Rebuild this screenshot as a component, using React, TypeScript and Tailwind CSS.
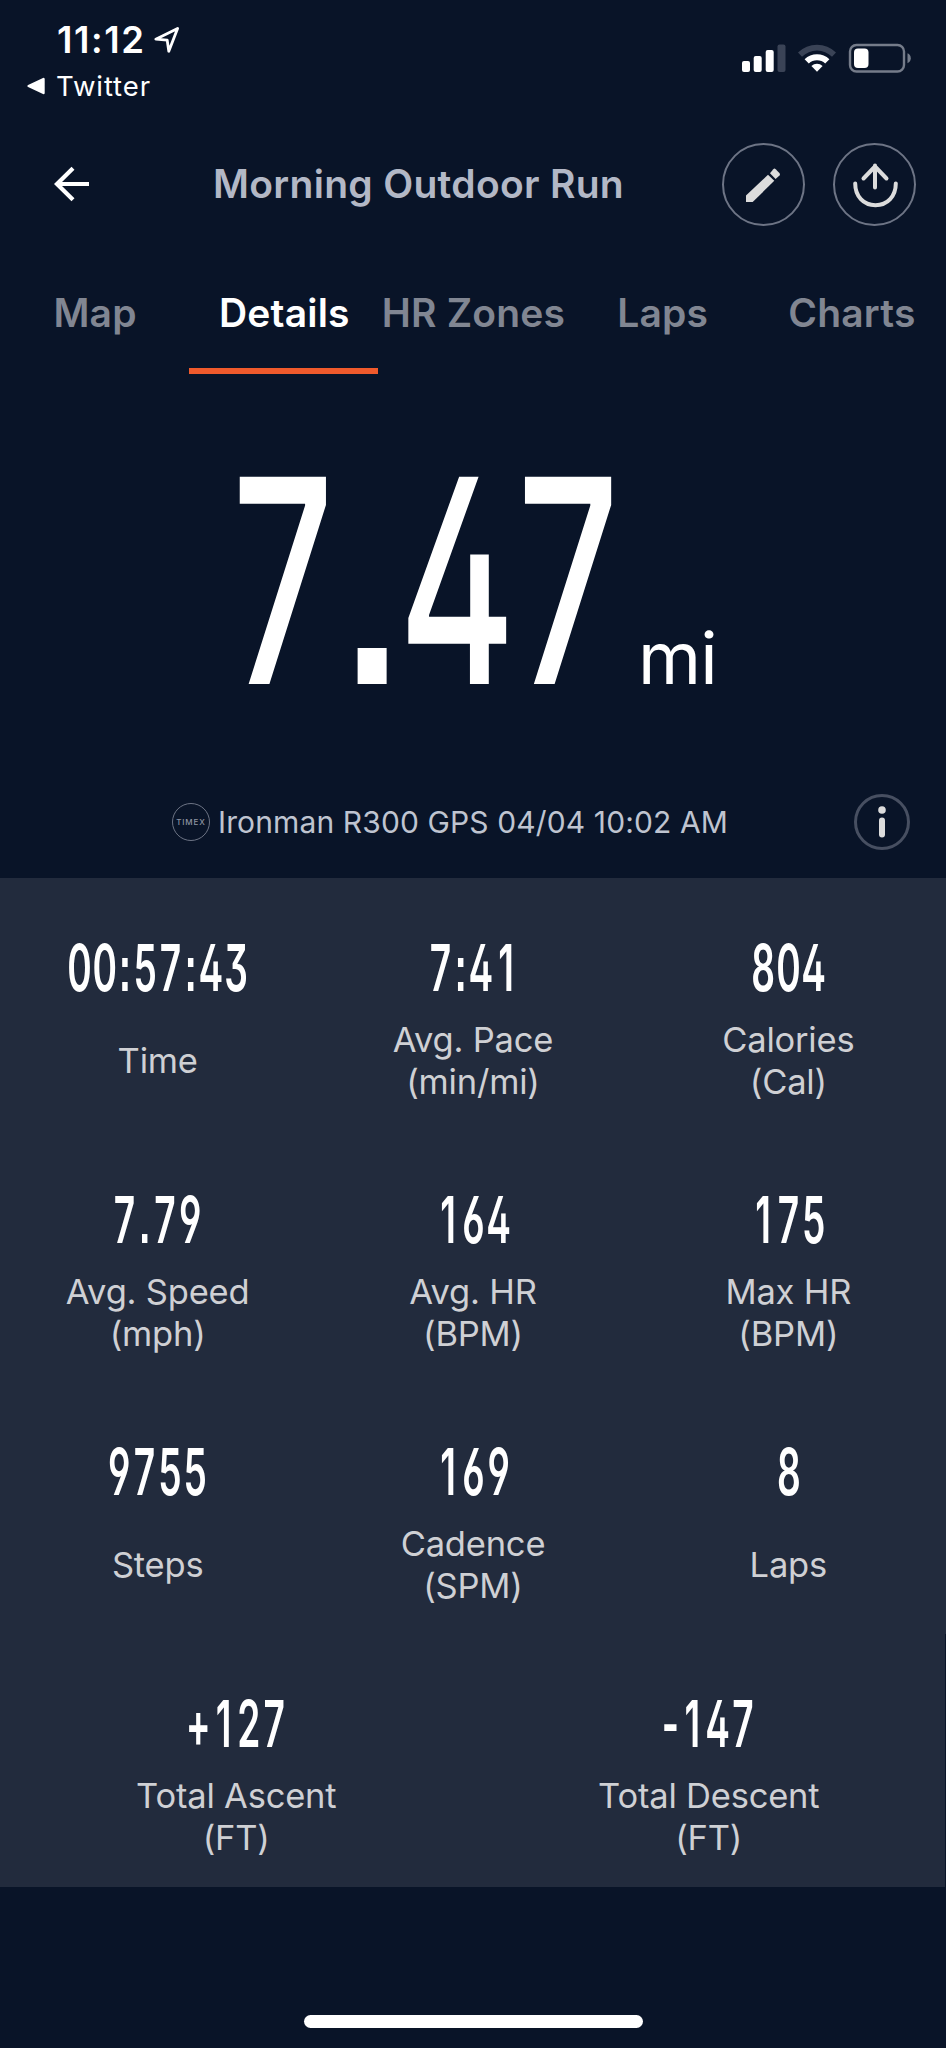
import clsx from "clsx";

type Stat = {
  value: string;
  label: string;
  unit?: string;
};

const tabs = ["Map", "Details", "HR Zones", "Laps", "Charts"];

const rows: Stat[][] = [
  [
    { value: "00:57:43", label: "Time" },
    { value: "7:41", label: "Avg. Pace", unit: "(min/mi)" },
    { value: "804", label: "Calories", unit: "(Cal)" },
  ],
  [
    { value: "7.79", label: "Avg. Speed", unit: "(mph)" },
    { value: "164", label: "Avg. HR", unit: "(BPM)" },
    { value: "175", label: "Max HR", unit: "(BPM)" },
  ],
  [
    { value: "9755", label: "Steps" },
    { value: "169", label: "Cadence", unit: "(SPM)" },
    { value: "8", label: "Laps" },
  ],
  [
    { value: "+127", label: "Total Ascent", unit: "(FT)" },
    { value: "-147", label: "Total Descent", unit: "(FT)" },
  ],
];

function StatusBar() {
  return (
    <div className="flex h-[120px] justify-between text-white">
      <div className="pt-[16px] pl-[26px]">
        <div className="flex h-[48px] items-center gap-[8px] pl-[31px]">
          <span className="text-[36.5px] font-semibold leading-[48px] tracking-[1.6px]">11:12</span>
          <svg width="26" height="28" viewBox="0 0 26 28" fill="none" className="mb-[1px]">
            <path d="M1.8 13.2 23.6 2.4 14.8 25.2 13.2 14.2Z" stroke="white" strokeWidth="2.8" strokeLinejoin="round" />
          </svg>
        </div>
        <div className="flex h-[44px] items-center gap-[10px]">
          <svg width="20" height="18" viewBox="0 0 20 18">
            <path d="M2.6 9 17.5 2V16Z" fill="white" stroke="white" strokeWidth="2.4" strokeLinejoin="round" />
          </svg>
          <span className="text-[27.5px] leading-[44px] tracking-[0.9px]">Twitter</span>
        </div>
      </div>

      <div className="flex items-start gap-[11px] pt-[43px] pr-[34px]">
        <svg width="45" height="30" viewBox="0 0 45 30">
          <rect x="1" y="18" width="8" height="11" rx="2" fill="white" />
          <rect x="12.7" y="13" width="8" height="16" rx="2" fill="white" />
          <rect x="24.7" y="7" width="8" height="22" rx="2" fill="white" />
          <rect x="36.5" y="1.5" width="8" height="27.5" rx="2" fill="#3a4356" />
        </svg>
        <svg width="40" height="30" viewBox="0 0 40 30">
          <path d="M1 9.5A27 27 0 0 1 39 9.5L35 13.8A21.2 21.2 0 0 0 5 13.8Z" fill="#3a4356" />
          <path d="M7.6 16.2A17.7 17.7 0 0 1 32.4 16.2L28.2 20.4A12 12 0 0 0 11.8 20.4Z" fill="white" />
          <path d="M14.4 22.9A8.1 8.1 0 0 1 25.6 22.9L20 28.8Z" fill="white" />
        </svg>
        <svg width="64" height="30" viewBox="0 0 64 30">
          <rect x="2" y="2" width="54" height="26.5" rx="6.5" fill="none" stroke="#757c8a" strokeWidth="2.4" />
          <rect x="6" y="5.5" width="14.5" height="19.5" rx="4" fill="white" />
          <path d="M59.5 10.3Q62.8 11.8 62.8 15.2T59.5 20.2Z" fill="#757c8a" />
        </svg>
      </div>
    </div>
  );
}

function Header() {
  return (
    <header className="flex h-[129px] items-center pl-[54px] pr-[29px]">
      <svg width="36" height="36" viewBox="0 0 36 36" fill="none" className="mb-[1px]">
        <path d="M19 2.3 3 18 19 33.7M3 18H35" stroke="white" strokeWidth="4.2" />
      </svg>
      <h1 className="mb-[2px] ml-[123px] w-[509px] whitespace-nowrap text-[39px] font-semibold leading-[50px] tracking-[0.3px] text-[#b3b8c6]">
        Morning Outdoor Run
      </h1>
      <div className="flex gap-[28px]">
        <button className="flex size-[83px] items-center justify-center rounded-full border-2 border-[#6d7485]">
          <svg width="36" height="36" viewBox="0 0 36 36" fill="#dcdcdc" className="mr-[2px]">
            <path d="M1 35V28.6L23 7.8 29.3 13.8 7.7 35Z" />
            <path d="M25 6.2 28.3 2.2Q29.4 1 30.7 2.2L34.6 6.2Q35.4 7.4 34.5 8.6L30.6 12Z" />
          </svg>
        </button>
        <button className="flex size-[83px] items-center justify-center rounded-full border-2 border-[#6d7485]">
          <svg width="46" height="46" viewBox="0 0 46 46" fill="none" stroke="#dcdcdc" strokeWidth="4" strokeLinecap="round">
            <path d="M3.2 21.5C3.2 34.2 11.5 43.2 23.5 43.2S43.8 34.2 43.8 21.5" />
            <path d="M23 25.5V3.5M11.5 16.5 23 4.5 34.5 16.5" />
          </svg>
        </button>
      </div>
    </header>
  );
}

function Tabs() {
  return (
    <nav className="grid h-[125px] grid-cols-5">
      {tabs.map((tab) => (
        <div
          key={tab}
          className={clsx(
            "flex justify-center whitespace-nowrap border-b-[6px] pl-[1px] pt-[39px] text-[39px] font-semibold leading-[50px] tracking-[0.2px]",
            tab === "Details" ? "border-[#f05a2c] text-white" : "border-transparent text-[#818692]",
          )}
        >
          {tab}
        </div>
      ))}
    </nav>
  );
}

function Digits({ value }: { value: string }) {
  return (
    <>
      {value.split("").map((ch, i) => (
        <span
          key={i}
          className={clsx(
            "inline-block text-center",
            ch === ":" || ch === "." ? "w-[26px]" : ch === "-" ? "w-[32px]" : "w-[43.6px]",
          )}
        >
          {ch}
        </span>
      ))}
    </>
  );
}

function StatCell({ value, label, unit }: Stat) {
  return (
    <div className="flex h-[252px] flex-1 flex-col items-center">
      <div className="mt-[55px] h-[70px] origin-center scale-x-[0.58] whitespace-nowrap text-[64px] font-semibold leading-[70px] text-white [font-feature-settings:'ss01','ss07']">
        <Digits value={value} />
      </div>
      <div className="mt-[16px] flex h-[84px] flex-col justify-center whitespace-nowrap text-center text-[34.5px] leading-[42px] tracking-[-0.2px] text-[#cfd0d4]">
        <span>{label}</span>
        {unit && <span>{unit}</span>}
      </div>
    </div>
  );
}

export default function App() {
  return (
    <div className="flex h-[2048px] w-[946px] flex-col overflow-hidden bg-[#091428] font-['Inter',sans-serif]">
      <StatusBar />
      <Header />
      <Tabs />

      <div className="flex h-[398px] items-baseline pl-[225px] pt-[37px]">
        <div className="w-[413px]">
          <span className="inline-block origin-left scale-x-[0.627] whitespace-nowrap text-[285px] font-[450] leading-[340px] text-white [font-feature-settings:'ss01','ss07','tnum']">
            <span className="tracking-[12px]">7</span>
            <span className="inline-block origin-center scale-x-[1.25] tracking-[5px]">.</span>
            <span className="tracking-[-8px]">4</span>
            <span>7</span>
          </span>
        </div>
        <span className="text-[72px] leading-[90px] tracking-[-0.8px] text-white">mi</span>
      </div>

      <div className="flex h-[106px] items-start pl-[172px] pr-[36px] pt-[22px]">
        <div className="mt-[9px] flex size-[38px] shrink-0 items-center justify-center rounded-full border border-[#6d7485] text-[8px] font-medium tracking-[0.9px] text-[#8f95a3]">
          TIMEX
        </div>
        <span className="ml-[8px] flex-1 whitespace-nowrap text-[30px] leading-[56px] tracking-[0.12px] text-[#bfc4d0]">
          Ironman R300 GPS 04/04 10:02 AM
        </span>
        <button className="flex size-[56px] items-center justify-center rounded-full border-[3px] border-[#474f61]">
          <svg width="10" height="32" viewBox="0 0 10 32" fill="#dcdcdc">
            <circle cx="5" cy="4" r="3.8" />
            <rect x="2" y="11.5" width="6" height="20" rx="3" />
          </svg>
        </button>
      </div>

      <main className="flex flex-col">
        {rows.map((row, i) => (
          <div key={i} className="flex bg-[#222b3d] last:mr-[1px] last:pb-[1px]">
            {row.map((stat) => (
              <StatCell key={stat.label} {...stat} />
            ))}
          </div>
        ))}
      </main>

      <footer className="flex flex-1 justify-center pt-[128px]">
        <div className="h-[13px] w-[339px] rounded-full bg-white" />
      </footer>
    </div>
  );
}
